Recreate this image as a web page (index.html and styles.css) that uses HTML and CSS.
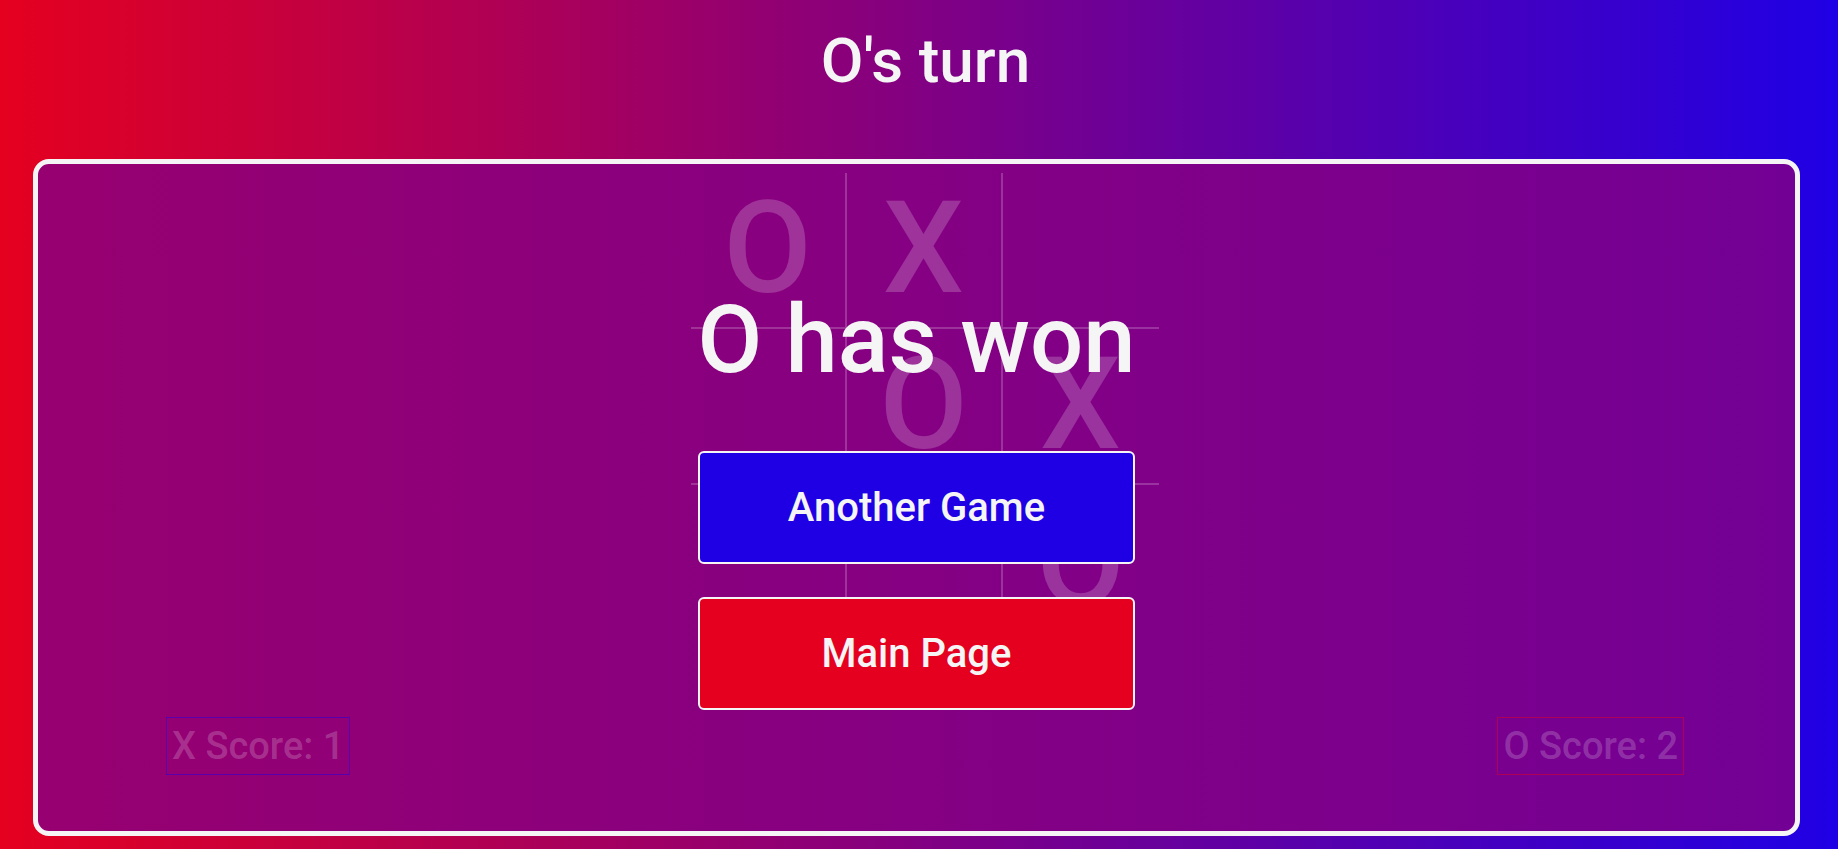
FILE: index.html
```html
<!DOCTYPE html>
<html lang="en">
<head>
<meta charset="utf-8">
<title>Tic Tac Toe</title>
<link rel="stylesheet" href="styles.css">
</head>
<body>
  <header class="turn">O's turn</header>
  <main class="frame">
    <section class="game">
      <div class="board">
        <div class="cell">O</div>
        <div class="cell">X</div>
        <div class="cell"></div>
        <div class="cell"></div>
        <div class="cell">O</div>
        <div class="cell">X</div>
        <div class="cell"></div>
        <div class="cell"></div>
        <div class="cell">O</div>
      </div>
      <div class="scores">
        <div class="score score-x">X Score: 1</div>
        <div class="score score-o">O Score: 2</div>
      </div>
    </section>
    <section class="result">
      <h2 class="result-title">O has won</h2>
      <button class="btn btn-again">Another Game</button>
      <button class="btn btn-main">Main Page</button>
    </section>
  </main>
</body>
</html>
```
FILE: styles.css
```css
* { box-sizing: border-box; }

html, body {
  margin: 0;
  height: 849px;
  overflow: hidden;
}

body {
  background: linear-gradient(to right, #e5001f, #1f00e5);
  font-family: Roboto, "Liberation Sans", sans-serif;
  color: #f5f5f5;
}

.turn {
  height: 159px;
  padding: 24px 0 0 13px;
  text-align: center;
  font-size: 62px;
  font-weight: 500;
  line-height: normal;
}

.frame {
  position: relative;
  margin-left: 33px;
  width: 1767px;
  height: 677px;
  border: 5px solid #f5f5f5;
  border-radius: 16px;
  background: linear-gradient(to right, #970070, #730095);
  overflow: hidden;
}

.game {
  height: 100%;
  display: flex;
  flex-direction: column;
  align-items: center;
  padding: 9px 0 56px 17px;
}

.board {
  display: grid;
  grid-template-columns: repeat(3, 156px);
  grid-template-rows: repeat(3, 156px);
  width: 469px;
}

.cell {
  display: flex;
  align-items: center;
  justify-content: center;
  font-size: 128px;
  font-weight: 500;
  line-height: 1;
  color: rgba(255, 255, 255, 0.2);
  padding-bottom: 4px;
}

.cell:nth-child(3n+1),
.cell:nth-child(3n+2) {
  border-right: 2px solid rgba(255, 255, 255, 0.2);
}

.cell:nth-child(-n+6) {
  border-bottom: 2px solid rgba(255, 255, 255, 0.2);
}

.scores {
  margin-top: auto;
  width: 100%;
  display: flex;
  justify-content: space-between;
  padding: 0 111px 0 111px;
}

.score {
  height: 58px;
  padding: 0 5px;
  display: flex;
  align-items: center;
  font-size: 38px;
  font-weight: 500;
  color: rgba(255, 255, 255, 0.2);
}

.score-x { border: 1px solid rgba(31, 0, 229, 0.5); }
.score-o { border: 1px solid rgba(229, 0, 31, 0.5); }

.result {
  position: absolute;
  inset: 0;
  display: flex;
  flex-direction: column;
  align-items: center;
  justify-content: center;
}

.result-title {
  margin: 0 0 56px;
  font-size: 94px;
  font-weight: 500;
  line-height: normal;
  color: #f5f5f5;
}

.btn {
  width: 437px;
  height: 113px;
  border: 2px solid #f5f5f5;
  border-radius: 6px;
  font-family: Roboto, "Liberation Sans", sans-serif;
  font-size: 40px;
  font-weight: 500;
  color: #f5f5f5;
  cursor: pointer;
}

.btn-again {
  background: #1f00e5;
  margin-bottom: 33px;
}

.btn-main {
  background: #e5001f;
}
```
